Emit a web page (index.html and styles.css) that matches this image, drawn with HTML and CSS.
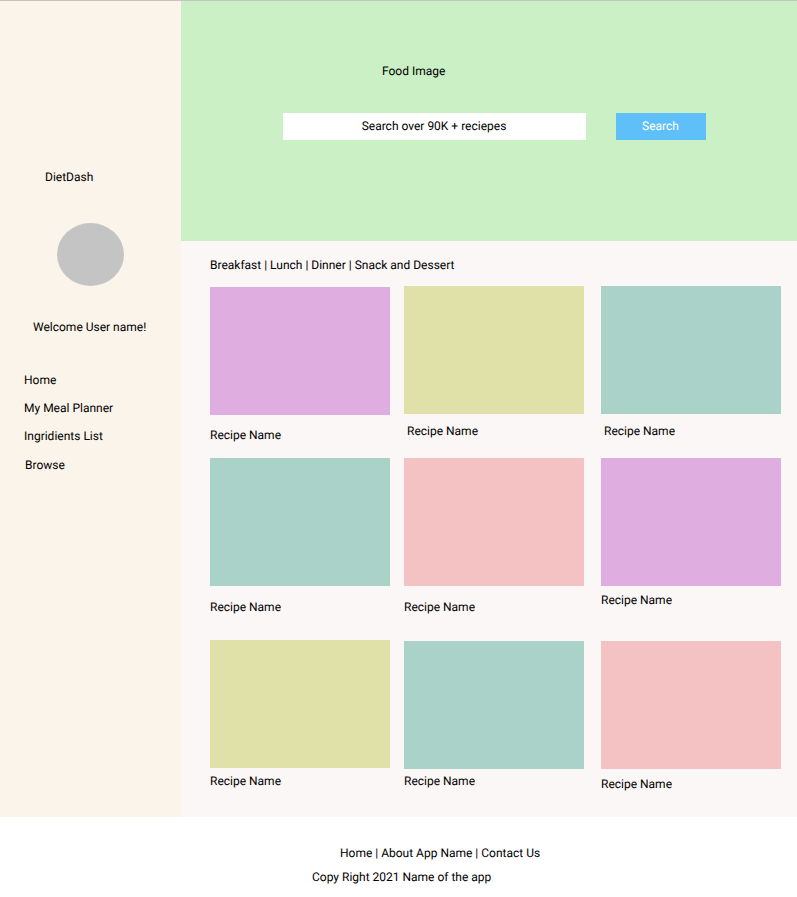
FILE: index.html
```html
<!DOCTYPE html>
<html lang="en">
<head>
<meta charset="utf-8">
<title>DietDash</title>
<link rel="stylesheet" href="styles.css">
</head>
<body>
<div class="layout">
  <aside class="sidebar">
    <div class="brand">DietDash</div>
    <div class="avatar"></div>
    <div class="welcome">Welcome User name!</div>
    <nav class="menu">
      <a>Home</a>
      <a>My Meal Planner</a>
      <a>Ingridients List</a>
      <a class="browse">Browse</a>
    </nav>
  </aside>
  <main class="main">
    <header class="hero">
      <div class="hero-title">Food Image</div>
      <div class="search">
        <div class="search-field">Search over 90K + reciepes</div>
        <div class="search-button">Search</div>
      </div>
    </header>
    <section class="recipes">
      <div class="tabs">Breakfast | Lunch | Dinner | Snack and Dessert</div>
      <div class="grid">
        <article class="card low1"><div class="photo purple"></div><p class="gap13">Recipe Name</p></article>
        <article class="card"><div class="photo olive"></div><p class="gap10 indent">Recipe Name</p></article>
        <article class="card"><div class="photo teal"></div><p class="gap10 indent">Recipe Name</p></article>
        <article class="card"><div class="photo teal"></div><p class="gap14">Recipe Name</p></article>
        <article class="card"><div class="photo pink"></div><p class="gap14">Recipe Name</p></article>
        <article class="card"><div class="photo purple"></div><p class="gap7">Recipe Name</p></article>
        <article class="card"><div class="photo olive"></div><p class="gap6">Recipe Name</p></article>
        <article class="card low1"><div class="photo teal"></div><p class="gap5">Recipe Name</p></article>
        <article class="card low1"><div class="photo pink"></div><p class="gap8">Recipe Name</p></article>
      </div>
    </section>
  </main>
</div>
<footer class="footer">
  <div class="links">Home | About App Name | Contact Us</div>
  <div class="copyright">Copy Right 2021 Name of the app</div>
</footer>
</body>
</html>
```
FILE: styles.css
```css
* { box-sizing: border-box; }
body {
  margin: 0;
  width: 797px;
  height: 897px;
  overflow: hidden;
  background: #fff;
  color: #000;
  font: 12px/14px Roboto, sans-serif;
  text-rendering: geometricPrecision;
}
.layout {
  display: flex;
  height: 817px;
  border-top: 1px solid #c4c4c4;
}
.sidebar { width: 181px; background: #fbf4ea; padding-top: 169px; }
.brand { margin-left: 45px; }
.avatar {
  width: 67px;
  height: 63px;
  margin: 39px 0 0 57px;
  border-radius: 50%;
  background: #c4c4c4;
}
.welcome { margin: 34px 0 0 33px; }
.menu { display: flex; flex-direction: column; gap: 14px; margin: 39px 0 0 24px; }
.menu .browse { margin: 1px 0 0 1px; }
.main { flex: 1; background: #fbf7f6; }
.hero { height: 240px; background: #cbf0c5; padding-top: 63px; }
.hero-title { margin-left: 201px; }
.search { display: flex; gap: 30px; margin: 35px 0 0 102px; line-height: 27px; text-align: center; }
.search-field { width: 303px; height: 27px; padding-right: 1px; background: #fff; }
.search-button { width: 90px; height: 27px; padding-right: 1px; background: #5fbff9; color: #fff; }
.recipes { padding: 17px 0 0 29px; }
.tabs { height: 14px; }
.grid {
  display: grid;
  grid-template-columns: 194px 197px 180px;
  grid-template-rows: 172px 182px 160px;
  margin-top: 14px;
}
.low1 { padding-top: 1px; }
.photo { width: 180px; height: 128px; }
.purple { background: #dfaddf; }
.olive { background: #e0e1a8; }
.teal { background: #abd2c9; }
.pink { background: #f4c2c3; }
.card p { margin: 0; }
.card .gap5 { margin-top: 5px; }
.card .gap6 { margin-top: 6px; }
.card .gap7 { margin-top: 7px; }
.card .gap8 { margin-top: 8px; }
.card .gap10 { margin-top: 10px; }
.card .gap13 { margin-top: 13px; }
.card .gap14 { margin-top: 14px; }
.card .indent { margin-left: 3px; }
.footer { padding-top: 29px; }
.links { margin-left: 340px; }
.copyright { margin: 10px 0 0 312px; }
```
